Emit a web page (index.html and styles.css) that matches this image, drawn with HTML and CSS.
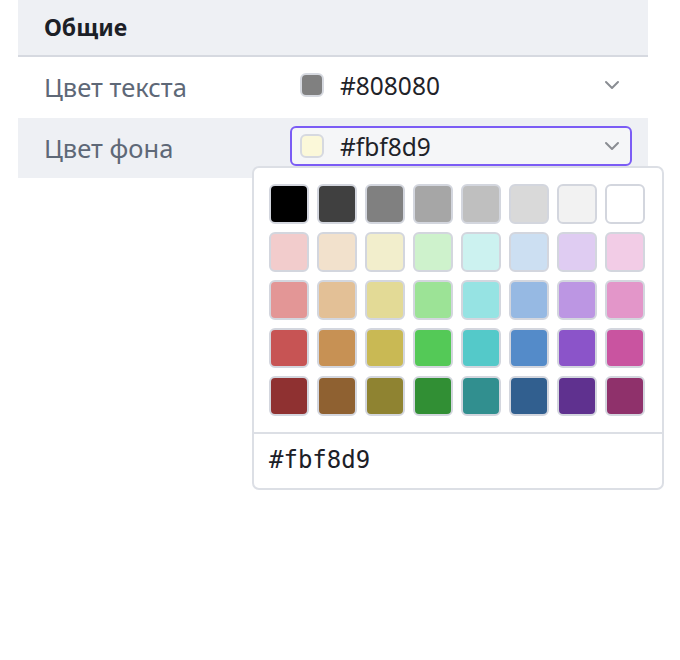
FILE: index.html
```html
<!DOCTYPE html>
<html lang="ru">
  <head>
    <meta charset="UTF-8" />
    <meta name="viewport" content="width=device-width, initial-scale=1.0" />
    <title>Настройки</title>

    <link rel="stylesheet" href="styles.css">
  </head>
  <body>
    <div class="settings">
      <div class="sectionHead">Общие</div>

      <div class="row">
        <div class="label">Цвет текста</div>
        <div class="select">
          <span class="chip" style="background: #808080"></span>
          <span class="hex">#808080</span>
          <svg class="chevron" width="16" height="10" viewBox="0 0 16 10">
            <path d="M2 2 L8 8 L14 2" />
          </svg>
        </div>
      </div>

      <div class="row alt">
        <div class="label">Цвет фона</div>
        <div class="select open">
          <span class="chip" style="background: #fbf8d9"></span>
          <span class="hex">#fbf8d9</span>
          <svg class="chevron" width="16" height="10" viewBox="0 0 16 10">
            <path d="M2 2 L8 8 L14 2" />
          </svg>
        </div>
      </div>

      <!-- palette dropdown, hangs over the bottom of the row above -->
      <div class="palette">
        <div class="swatches">
          <span class="swatch" style="background: #000000"></span>
          <span class="swatch" style="background: #404040"></span>
          <span class="swatch" style="background: #808080"></span>
          <span class="swatch" style="background: #a6a6a6"></span>
          <span class="swatch" style="background: #bfbfbf"></span>
          <span class="swatch" style="background: #d9d9d9"></span>
          <span class="swatch" style="background: #f2f2f2"></span>
          <span class="swatch" style="background: #ffffff"></span>

          <span class="swatch" style="background: #f2cccc"></span>
          <span class="swatch" style="background: #f2e1cc"></span>
          <span class="swatch" style="background: #f2eecc"></span>
          <span class="swatch" style="background: #cef2cc"></span>
          <span class="swatch" style="background: #ccf2f0"></span>
          <span class="swatch" style="background: #ccdff2"></span>
          <span class="swatch" style="background: #dfccf2"></span>
          <span class="swatch" style="background: #f2cce6"></span>

          <span class="swatch" style="background: #e39696"></span>
          <span class="swatch" style="background: #e3c096"></span>
          <span class="swatch" style="background: #e3da96"></span>
          <span class="swatch" style="background: #9ce396"></span>
          <span class="swatch" style="background: #96e3e3"></span>
          <span class="swatch" style="background: #96b9e3"></span>
          <span class="swatch" style="background: #bc96e3"></span>
          <span class="swatch" style="background: #e396c9"></span>

          <span class="swatch" style="background: #c75454"></span>
          <span class="swatch" style="background: #c79154"></span>
          <span class="swatch" style="background: #c9b954"></span>
          <span class="swatch" style="background: #54c957"></span>
          <span class="swatch" style="background: #54c9c9"></span>
          <span class="swatch" style="background: #548bc9"></span>
          <span class="swatch" style="background: #8b54c9"></span>
          <span class="swatch" style="background: #c954a0"></span>

          <span class="swatch" style="background: #8f3131"></span>
          <span class="swatch" style="background: #8f6131"></span>
          <span class="swatch" style="background: #8f8331"></span>
          <span class="swatch" style="background: #318f34"></span>
          <span class="swatch" style="background: #318f8f"></span>
          <span class="swatch" style="background: #315f8f"></span>
          <span class="swatch" style="background: #5f318f"></span>
          <span class="swatch" style="background: #8f316b"></span>
        </div>
        <div class="hexInput">#fbf8d9</div>
      </div>
    </div>
  </body>
</html>
```

FILE: styles.css
```css
* {
  margin: 0;
  padding: 0;
  box-sizing: border-box;
}

body {
  font-family: "Noto Sans", sans-serif;
  background: #fff;
}

.settings {
  width: 630px;
  margin-left: 18px;
}

.sectionHead {
  height: 57px;
  padding: 11px 26px 0;
  background: #eef0f4;
  border-bottom: 2px solid #d6d9e0;
  font-size: 23px;
  font-weight: 700;
  color: #1c2027;
}

.row {
  display: grid;
  grid-template-columns: 272px 342px;
  align-items: start;
  height: 61px;
  padding-top: 8px;
}

.row.alt {
  height: 60px;
  background: #eef0f4;
}

.label {
  padding-left: 26px;
  padding-top: 5px;
  font-size: 25.5px;
  color: #5e6877;
}

.select {
  display: flex;
  align-items: center;
  height: 40px;
  padding: 0 10px;
  border: 2px solid transparent;
  border-radius: 6px;
}

.select.open {
  border-color: #7b5cf5;
  background: #f5f6f8;
}

.chip {
  width: 24px;
  height: 24px;
  border: 2px solid #d6d9e0;
  border-radius: 6px;
  margin-left: -2px;
  margin-right: 16px;
}

.hex {
  flex: 1;
  font-size: 24.5px;
  color: #1f2329;
}

.chevron path {
  fill: none;
  stroke: #8a8d93;
  stroke-width: 2;
  stroke-linecap: round;
  stroke-linejoin: round;
}

.palette {
  position: relative;
  width: 412px;
  margin: -12px 0 0 234px;
  background: #fff;
  border: 2px solid #dcdfe5;
  border-radius: 7px;
}

.swatches {
  display: grid;
  grid-template-columns: repeat(8, 40px);
  gap: 8px;
  padding: 16px 15px;
}

.swatch {
  width: 40px;
  height: 40px;
  border: 2px solid #d3d6de;
  border-radius: 6px;
}

.hexInput {
  height: 56px;
  padding: 12px 15px 0;
  border-top: 2px solid #dcdfe5;
  font-family: "DejaVu Sans Mono", monospace;
  font-size: 24px;
  color: #1c2027;
}
```
